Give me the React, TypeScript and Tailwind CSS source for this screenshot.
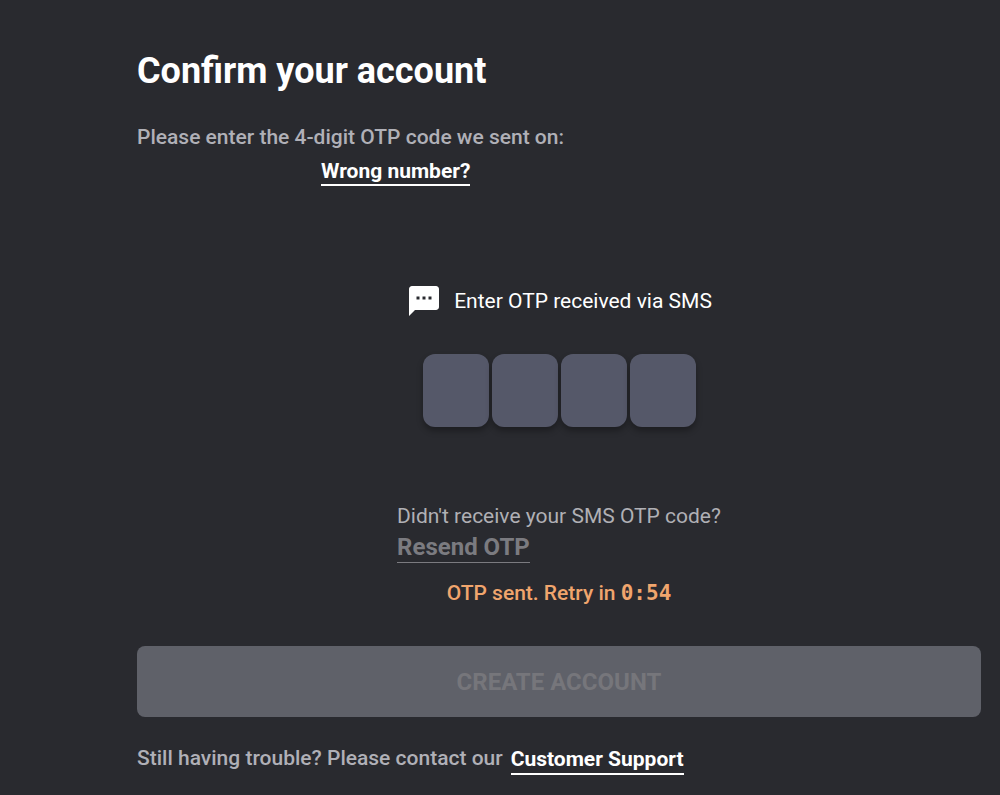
import { useState } from "react";
import { MdSms } from "react-icons/md";

const DIGITS = [1, 2, 3, 4];

export default function App() {
  const [code, setCode] = useState(["", "", "", ""]);

  return (
    <main className="flex min-h-screen flex-col bg-[#292a2f] pt-[49px] pr-[19px] pb-4 pl-[137px] font-['Roboto',sans-serif] text-[21px] leading-6 text-white">
      <h1 className="text-[36px] leading-[44px] font-bold">Confirm your account</h1>

      <div className="mt-8 font-medium text-[#b0b0b7]">
        <p>Please enter the 4-digit OTP code we sent on:</p>
        <a
          href="#number"
          className="mt-[9px] ml-[184px] inline-block border-b-2 border-white leading-[26px] font-bold text-white"
        >
          Wrong number?
        </a>
      </div>

      <section className="mt-[97px] flex flex-col items-center">
        <h2 className="flex items-center gap-3">
          <MdSms size={36} aria-hidden="true" />
          Enter OTP received via SMS
        </h2>
        <div className="mt-[35px] flex gap-[3px]">
          {DIGITS.map((n, i) => (
            <input
              key={n}
              aria-label={`Digit ${n}`}
              inputMode="numeric"
              maxLength={1}
              value={code[i]}
              onChange={(e) => setCode(code.map((c, j) => (j === i ? e.target.value : c)))}
              className="h-[73px] w-[66px] rounded-xl bg-[#555869] text-center text-3xl shadow-[0_4px_6px_rgba(0,0,0,0.3)] outline-none"
            />
          ))}
        </div>

        <div className="mt-[77px] flex flex-col items-start">
          <p className="text-[#b0b0b5]">Didn't receive your SMS OTP code?</p>
          <button
            type="button"
            disabled
            className="mt-1 border-b border-[#7b7b80] text-[24px] leading-[30px] font-bold text-[#7b7b80]"
          >
            Resend OTP
          </button>
        </div>
        <p className="mt-[18px] font-medium text-[#f0a56d]">
          OTP sent. Retry in{" "}
          <span className="font-['DejaVu_Sans_Mono',monospace] font-bold">0:54</span>
        </p>
      </section>

      <button
        type="button"
        disabled
        className="mt-[41px] h-[71px] w-full rounded-lg bg-[#5f6169] text-[24px] font-bold text-[#76767b]"
      >
        CREATE ACCOUNT
      </button>

      <div className="mt-[29px] flex items-start gap-2">
        <p className="font-medium text-[#b0b0b7]">Still having trouble? Please contact our</p>
        <a href="#support" className="border-b-2 border-white leading-[27px] font-bold">
          Customer Support
        </a>
      </div>
    </main>
  );
}
